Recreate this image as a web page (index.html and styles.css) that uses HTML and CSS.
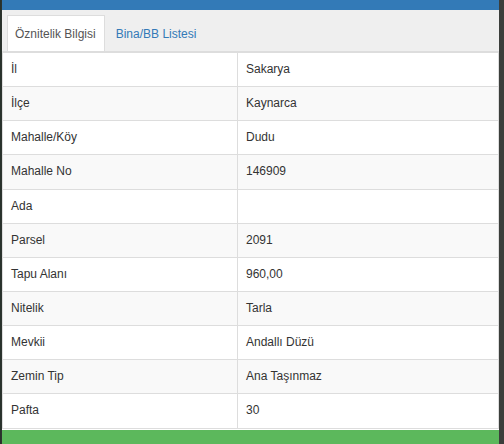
FILE: index.html
```html
<!DOCTYPE html>
<html lang="tr">
<head>
<meta charset="utf-8">
<title>Öznitelik Bilgisi</title>
<link rel="stylesheet" href="styles.css">
</head>
<body>
<div class="panel">
  <div class="panel-head"></div>
  <ul class="tabs">
    <li class="tab active"><a>Öznitelik Bilgisi</a></li>
    <li class="tab"><a>Bina/BB Listesi</a></li>
  </ul>
  <table class="attr">
    <tbody>
      <tr><td class="k">İl</td><td>Sakarya</td></tr>
      <tr><td class="k">İlçe</td><td>Kaynarca</td></tr>
      <tr><td class="k">Mahalle/Köy</td><td>Dudu</td></tr>
      <tr><td class="k">Mahalle No</td><td>146909</td></tr>
      <tr><td class="k">Ada</td><td></td></tr>
      <tr><td class="k">Parsel</td><td>2091</td></tr>
      <tr><td class="k">Tapu Alanı</td><td>960,00</td></tr>
      <tr><td class="k">Nitelik</td><td>Tarla</td></tr>
      <tr><td class="k">Mevkii</td><td>Andallı Düzü</td></tr>
      <tr><td class="k">Zemin Tip</td><td>Ana Taşınmaz</td></tr>
      <tr><td class="k">Pafta</td><td>30</td></tr>
    </tbody>
  </table>
  <div class="panel-foot"></div>
</div>
</body>
</html>
```

FILE: styles.css
```css
html, body {
  margin: 0;
  padding: 0;
  height: 100%;
}
body {
  background: linear-gradient(90deg, #263029 0, #2f3531 2px, #3b3e3b 100%);
  font-family: "Liberation Sans", Arial, sans-serif;
  font-size: 12px;
  line-height: 1.42857;
  color: #333;
  overflow: hidden;
}
.panel {
  margin-left: 2px;
  width: 497px;
  background: #fff;
}
.panel-head {
  height: 10px;
  background: #337ab7;
}
.tabs {
  list-style: none;
  margin: 0;
  padding: 5px 0 0 5px;
  display: flex;
  background: #efefef;
  border-bottom: 1px solid #ddd;
}
.tab {
  margin-right: 2px;
}
.tab a {
  display: block;
  padding: 10px 8px 8px;
  line-height: 17px;
  border: 1px solid transparent;
  border-bottom: 0;
  color: #337ab7;
}
.tab.active a {
  background: #fff;
  border-color: #ddd;
  color: #555;
  padding-left: 7px;
  padding-right: 8px;
}
.attr {
  width: 100%;
  border-collapse: collapse;
  border: 1px solid #ddd;
}
.attr td {
  padding: 8px;
  border: 1px solid #ddd;
  vertical-align: top;
}
.attr td.k {
  width: 218px;
}
.attr tr:nth-child(even) td {
  background: #f9f9f9;
}
.panel-foot {
  margin-top: 1px;
  height: 20px;
  background: #5cb85c;
}
```
